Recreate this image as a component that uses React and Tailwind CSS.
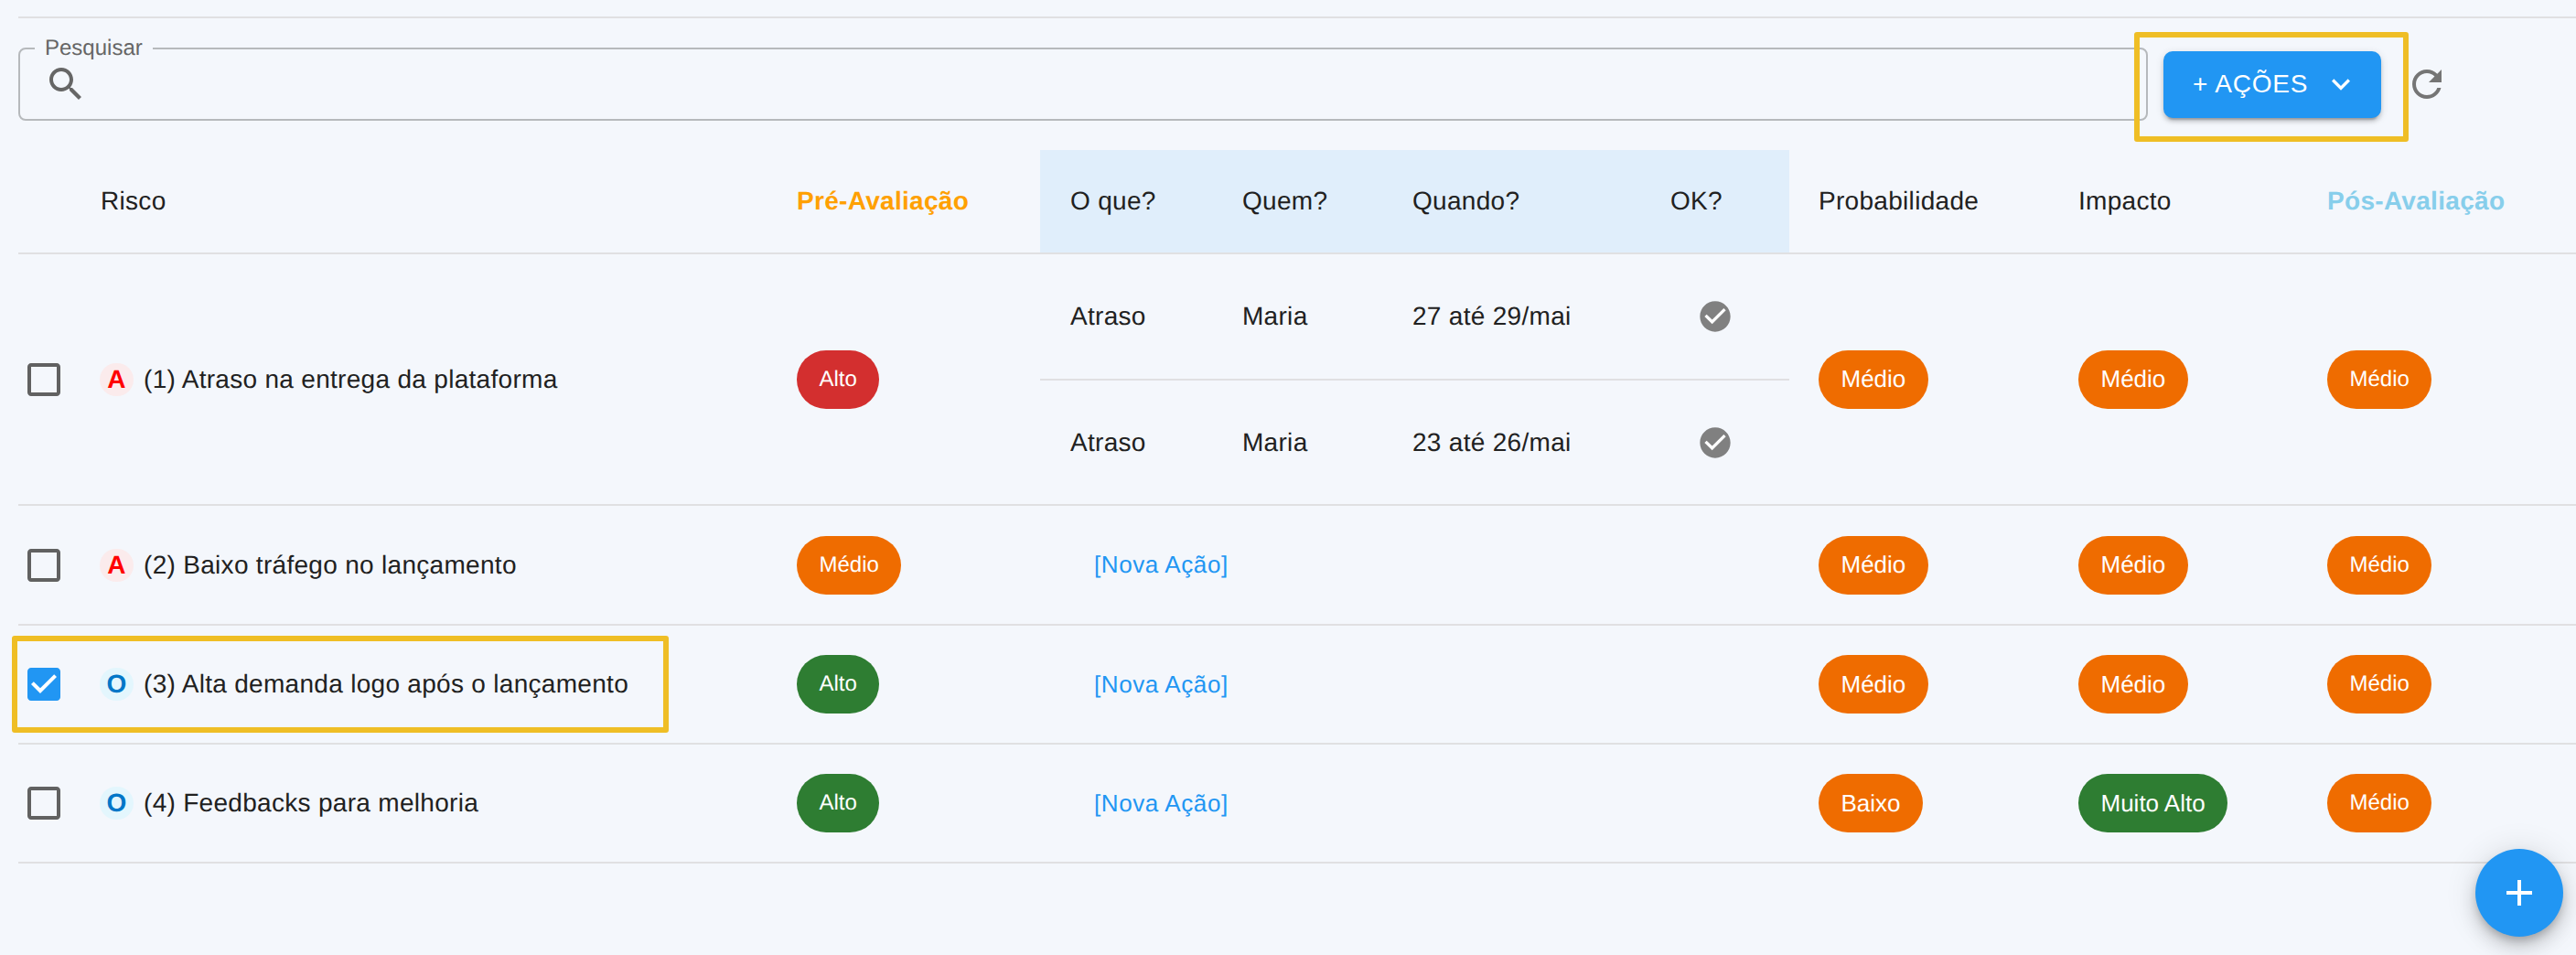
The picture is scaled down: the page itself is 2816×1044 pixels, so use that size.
const SEARCH = 'M15.5 14h-.79l-.28-.27C15.41 12.59 16 11.11 16 9.5 16 5.91 13.09 3 9.5 3S3 5.91 3 9.5 5.91 16 9.5 16c1.61 0 3.09-.59 4.23-1.57l.27.28v.79l5 4.99L20.49 19l-4.99-5zm-6 0C7.01 14 5 11.99 5 9.5S7.01 5 9.5 5 14 7.01 14 9.5 11.99 14 9.5 14z'
const EXPAND = 'M16.59 8.59 12 13.17 7.41 8.59 6 10l6 6 6-6z'
const REFRESH = 'M17.65 6.35C16.2 4.9 14.21 4 12 4c-4.42 0-7.99 3.58-7.99 8s3.57 8 7.99 8c3.73 0 6.84-2.55 7.73-6h-2.08c-.82 2.33-3.04 4-5.65 4-3.31 0-6-2.69-6-6s2.69-6 6-6c1.66 0 3.14.69 4.22 1.78L13 11h7V4l-2.35 2.35z'
const BOX_EMPTY = 'M19 5v14H5V5h14m0-2H5c-1.1 0-2 .9-2 2v14c0 1.1.9 2 2 2h14c1.1 0 2-.9 2-2V5c0-1.1-.9-2-2-2z'
const BOX_CHECKED = 'M19 3H5c-1.11 0-2 .9-2 2v14c0 1.1.89 2 2 2h14c1.11 0 2-.9 2-2V5c0-1.1-.89-2-2-2zm-9 14l-5-5 1.41-1.41L10 14.17l7.59-7.59L19 8l-9 9z'
const CHECK_CIRCLE = 'M12 2C6.48 2 2 6.48 2 12s4.48 10 10 10 10-4.48 10-10S17.52 2 12 2zm-2 15l-5-5 1.41-1.41L10 14.17l7.59-7.59L19 8l-9 9z'
const PLUS = 'M19 13h-6v6h-2v-6H5v-2h6V5h2v6h6v2z'

const CHIP_COLOR = { red: 'bg-[#d32f2f]', orange: 'bg-[#ef6c00]', green: 'bg-[#2e7d32]' }

const RISKS = [
  {
    id: 1, type: 'A', name: 'Atraso na entrega da plataforma', pre: ['Alto', 'red'], prob: ['Médio', 'orange'], impact: ['Médio', 'orange'], pos: ['Médio', 'orange'],
    actions: [
      { what: 'Atraso', who: 'Maria', when: '27 até 29/mai' },
      { what: 'Atraso', who: 'Maria', when: '23 até 26/mai' },
    ],
  },
  { id: 2, type: 'A', name: 'Baixo tráfego no lançamento', pre: ['Médio', 'orange'], prob: ['Médio', 'orange'], impact: ['Médio', 'orange'], pos: ['Médio', 'orange'], actions: [] },
  { id: 3, type: 'O', name: 'Alta demanda logo após o lançamento', checked: true, pre: ['Alto', 'green'], prob: ['Médio', 'orange'], impact: ['Médio', 'orange'], pos: ['Médio', 'orange'], actions: [] },
  { id: 4, type: 'O', name: 'Feedbacks para melhoria', pre: ['Alto', 'green'], prob: ['Baixo', 'orange'], impact: ['Muito Alto', 'green'], pos: ['Médio', 'orange'], actions: [] },
]

function Icon({ d, className }) {
  return (
    <svg viewBox="0 0 24 24" fill="currentColor" className={className}>
      <path d={d} />
    </svg>
  )
}

function Chip({ data, small }) {
  const [label, color] = data
  return (
    <span className={`inline-flex items-center h-[64px] px-[24.5px] rounded-[32px] text-white tracking-normal ${small ? 'text-[24px]' : 'text-[26px]'} ${CHIP_COLOR[color]}`}>
      {label}
    </span>
  )
}

function Checkbox({ checked }) {
  if (checked) {
    return (
      <svg viewBox="0 0 24 24" className="w-[48px] h-[48px] text-[#2196f3]" fill="currentColor">
        <rect x="4" y="4" width="16" height="16" fill="#fff" />
        <path d={BOX_CHECKED} />
      </svg>
    )
  }
  return <Icon d={BOX_EMPTY} className="w-[48px] h-[48px] text-[#616161]" />
}

function TypeBadge({ type }) {
  const tone = type === 'A' ? 'bg-[#fbebec] text-[#ff0000]' : 'bg-[#e3f6fd] text-[#0277c8]'
  return (
    <span className={`flex items-center justify-center w-[37px] h-[36px] rounded-full font-bold text-[28px] shrink-0 ${tone}`}>
      {type}
    </span>
  )
}

function ActionCells({ action }) {
  const line = 'border-b-2 border-[#e0e0e2]'
  return (
    <>
      <td className={`pl-[33px] ${line}`}>{action.what}</td>
      <td className={`pl-[33px] ${line}`}>{action.who}</td>
      <td className={`pl-[32px] ${line}`}>{action.when}</td>
      <td className={`pl-[62px] ${line}`}>
        <svg viewBox="0 0 24 24" className="w-[40px] h-[40px] text-[#808080]" fill="currentColor">
          <circle cx="12" cy="12" r="8" fill="#fff" />
          <path d={CHECK_CIRCLE} />
        </svg>
      </td>
    </>
  )
}

function RiskRows({ risk, height }) {
  const border = 'border-b-2 border-[#e0e0e2]'
  const span = risk.actions.length || 1
  const lead = (
    <>
      <td rowSpan={span} className={`pl-[4px] ${border}`}><Checkbox checked={risk.checked} /></td>
      <td rowSpan={span} className={border}>
        <div className="flex items-center gap-[11px] -ml-[1px]">
          <TypeBadge type={risk.type} />
          <span>({risk.id}) {risk.name}</span>
        </div>
      </td>
      <td rowSpan={span} className={`pl-[1px] ${border}`}><Chip data={risk.pre} small /></td>
    </>
  )
  const tail = (
    <>
      <td rowSpan={span} className={`pl-[32px] ${border}`}><Chip data={risk.prob} /></td>
      <td rowSpan={span} className={border}><Chip data={risk.impact} /></td>
      <td rowSpan={span} className={border}><Chip data={risk.pos} small /></td>
    </>
  )

  if (!risk.actions.length) {
    return (
      <tr className={height}>
        {lead}
        <td colSpan={4} className={`pl-[59px] text-[26px] tracking-[0.6px] text-[#2196f3] ${border}`}>[Nova Ação]</td>
        {tail}
      </tr>
    )
  }
  return (
    <>
      <tr className="h-[138px]">
        {lead}
        <ActionCells action={risk.actions[0]} />
        {tail}
      </tr>
      <tr className="h-[137px]">
        <ActionCells action={risk.actions[1]} />
      </tr>
    </>
  )
}

export default function App() {
  const th = 'text-left border-b-2 border-[#e0e0e2]'
  return (
    <div className="relative h-[1044px] overflow-hidden bg-[#f4f7fc] pl-[20px] pt-[18px] text-[28px] tracking-[0.3px] text-[#212121] [text-rendering:geometricPrecision] font-['Liberation_Sans',Arial,sans-serif]">
      <div className="border-t-2 border-[#e0e0e2]" />

      {/* Toolbar */}
      <div className="flex items-center pt-[32px] pb-[32px]">
        <div className="relative flex items-center flex-1 h-[80px] pl-[26px] border-2 border-[#b6b9bc] rounded-[8px]">
          <label className="absolute -top-[15px] left-[16px] px-[11px] bg-[#f4f7fc] text-[24px] leading-[28px] tracking-normal text-[#666666]">Pesquisar</label>
          <Icon d={SEARCH} className="w-[48px] h-[48px] text-[#666666]" />
          <input className="flex-1 outline-none bg-transparent" />
        </div>
        <button className="flex items-center h-[73px] w-[238px] ml-[17px] pl-[32px] rounded-[10px] bg-[#2196f3] text-white text-[28px] tracking-[0.8px] shadow-[0_6px_2px_-4px_rgba(0,0,0,0.2),0_4px_4px_rgba(0,0,0,0.14),0_2px_10px_rgba(0,0,0,0.12)]">
          + AÇÕES
          <Icon d={EXPAND} className="w-[40px] h-[40px] ml-[16px]" />
        </button>
        <Icon d={REFRESH} className="w-[48px] h-[48px] ml-[26px] mr-[139px] text-[#757575]" />
      </div>

      {/* Risk table */}
      <table className="table-fixed w-[2796px] border-separate border-spacing-0">
        <colgroup>
          <col className="w-[90px]" />
          <col className="w-[760px]" />
          <col className="w-[267px]" />
          <col className="w-[188px]" />
          <col className="w-[187px]" />
          <col className="w-[281px]" />
          <col className="w-[163px]" />
          <col className="w-[316px]" />
          <col className="w-[272px]" />
          <col className="w-[272px]" />
        </colgroup>
        <thead>
          <tr className="h-[114px]">
            <th className={th} />
            <th className={`${th} font-normal`}>Risco</th>
            <th className={`${th} pl-[1px] font-bold text-[#ffa000]`}>Pré-Avaliação</th>
            <th className={`${th} font-normal pl-[33px] bg-[#e0eefb]`}>O que?</th>
            <th className={`${th} font-normal pl-[33px] bg-[#e0eefb]`}>Quem?</th>
            <th className={`${th} font-normal pl-[32px] bg-[#e0eefb]`}>Quando?</th>
            <th className={`${th} font-normal pl-[33px] bg-[#e0eefb]`}>OK?</th>
            <th className={`${th} font-normal pl-[32px]`}>Probabilidade</th>
            <th className={`${th} font-normal`}>Impacto</th>
            <th className={`${th} font-bold text-[#87ceeb]`}>Pós-Avaliação</th>
          </tr>
        </thead>
        <tbody>
          {RISKS.map((risk, i) => (
            <RiskRows key={risk.id} risk={risk} height={i === 1 ? 'h-[131px]' : 'h-[130px]'} />
          ))}
        </tbody>
      </table>

      {/* Annotation frames */}
      <div className="absolute left-[2333px] top-[35px] w-[300px] h-[120px] border-[6px] border-[#efbe25] rounded-[3px]" />
      <div className="absolute left-[13px] top-[695px] w-[718px] h-[106px] border-[6px] border-[#efbe25] rounded-[3px]" />

      <button className="absolute right-[14px] bottom-[20px] flex items-center justify-center w-[96px] h-[96px] rounded-full bg-[#2196f3] text-white shadow-[0_6px_10px_-2px_rgba(0,0,0,0.2),0_12px_20px_0_rgba(0,0,0,0.14),0_2px_36px_0_rgba(0,0,0,0.12)]">
        <Icon d={PLUS} className="w-[48px] h-[48px]" />
      </button>
    </div>
  )
}
